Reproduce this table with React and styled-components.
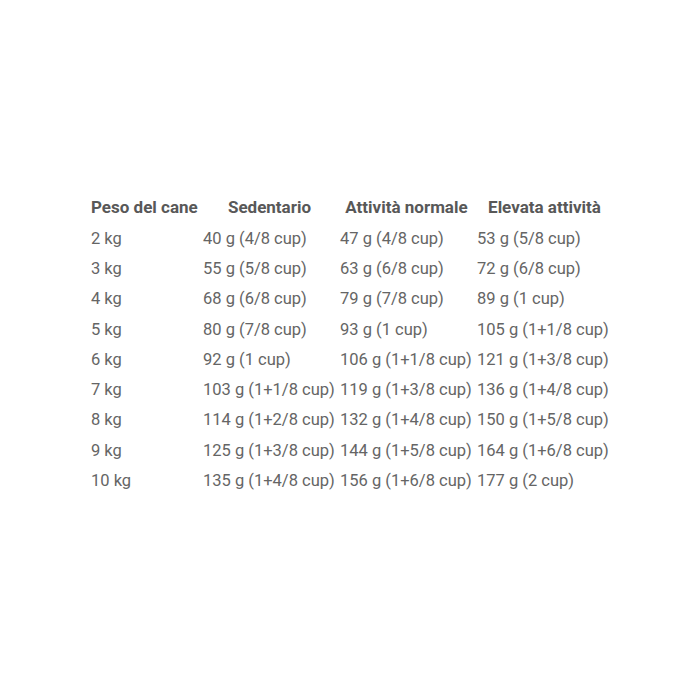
import React from "react";
import styled, { createGlobalStyle } from "styled-components";

const GlobalStyle = createGlobalStyle`
  html, body {
    margin: 0;
    padding: 0;
    background: #ffffff;
  }
  body {
    font-family: Roboto, "Liberation Sans", sans-serif;
  }
`;

const Page = styled.div`
  width: 687px;
  height: 687px;
  box-sizing: border-box;
  padding: 190px 0 0 91px;
`;

const Table = styled.table`
  border-collapse: collapse;
  table-layout: fixed;
  width: 525px;
`;

const Col = styled.col`
  width: ${(p) => p.$w}px;
`;

const HeadCell = styled.th`
  padding: 0 ${(p) => (p.$left ? 0 : 4)}px 0 0;
  height: 33px;
  font-size: 17px;
  font-weight: 700;
  color: #585858;
  text-align: ${(p) => (p.$left ? "left" : "center")};
  white-space: nowrap;
  vertical-align: middle;
`;

const Cell = styled.td`
  padding: 0;
  height: 30.3px;
  font-size: 16.5px;
  font-weight: 400;
  color: #656565;
  text-align: left;
  white-space: nowrap;
  vertical-align: middle;
`;

const rows = [
  ["2 kg", "40 g (4/8 cup)", "47 g (4/8 cup)", "53 g (5/8 cup)"],
  ["3 kg", "55 g (5/8 cup)", "63 g (6/8 cup)", "72 g (6/8 cup)"],
  ["4 kg", "68 g (6/8 cup)", "79 g (7/8 cup)", "89 g (1 cup)"],
  ["5 kg", "80 g (7/8 cup)", "93 g (1 cup)", "105 g (1+1/8 cup)"],
  ["6 kg", "92 g (1 cup)", "106 g (1+1/8 cup)", "121 g (1+3/8 cup)"],
  ["7 kg", "103 g (1+1/8 cup)", "119 g (1+3/8 cup)", "136 g (1+4/8 cup)"],
  ["8 kg", "114 g (1+2/8 cup)", "132 g (1+4/8 cup)", "150 g (1+5/8 cup)"],
  ["9 kg", "125 g (1+3/8 cup)", "144 g (1+5/8 cup)", "164 g (1+6/8 cup)"],
  ["10 kg", "135 g (1+4/8 cup)", "156 g (1+6/8 cup)", "177 g (2 cup)"],
];

export default function App() {
  return (
    <>
      <GlobalStyle />
      <Page>
        <Table>
          <colgroup>
            <Col $w={112} />
            <Col $w={137} />
            <Col $w={137} />
            <Col $w={139} />
          </colgroup>
          <thead>
            <tr>
              <HeadCell $left>Peso del cane</HeadCell>
              <HeadCell>Sedentario</HeadCell>
              <HeadCell>Attività normale</HeadCell>
              <HeadCell>Elevata attività</HeadCell>
            </tr>
          </thead>
          <tbody>
            {rows.map((r) => (
              <tr key={r[0]}>
                {r.map((c, i) => (
                  <Cell key={i}>{c}</Cell>
                ))}
              </tr>
            ))}
          </tbody>
        </Table>
      </Page>
    </>
  );
}
